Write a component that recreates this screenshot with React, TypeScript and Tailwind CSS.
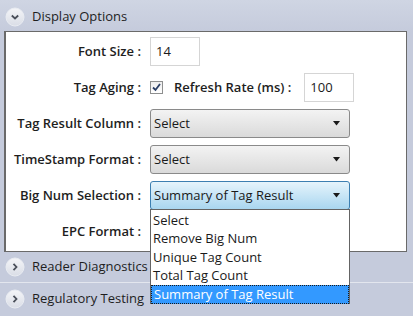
import React from "react";

const font = { fontFamily: '"Open Sans", "Noto Sans", sans-serif' };

function Chevron({ down }: { down?: boolean }) {
  return (
    <svg width="20" height="20" viewBox="0 0 20 20" className="shrink-0">
      <defs>
        <linearGradient id={down ? "cg1" : "cg2"} x1="0" y1="0" x2="0" y2="1">
          <stop offset="0" stopColor="#f4f5f8" />
          <stop offset="1" stopColor="#d9dde6" />
        </linearGradient>
      </defs>
      <circle cx="10" cy="10" r="9" fill={`url(#${down ? "cg1" : "cg2"})`} stroke="#e9ecf2" strokeWidth="1" />
      {down ? (
        <path d="M6.8 8.5 L10 11.5 L13.2 8.5" fill="none" stroke="#4a4f5a" strokeWidth="1.8" />
      ) : (
        <path d="M8.5 6.8 L11.5 10 L8.5 13.2" fill="none" stroke="#4a4f5a" strokeWidth="1.8" />
      )}
    </svg>
  );
}

function Arrow() {
  return (
    <svg width="8" height="5" viewBox="0 0 8 5">
      <path d="M0 0 H7 L3.5 4.5 Z" fill="#1a1a1a" />
    </svg>
  );
}

function SelectBox({ value, active }: { value: string; active?: boolean }) {
  return (
    <div
      className={`w-[200px] h-[29px] rounded-[3px] border flex items-center justify-between pl-[3px] pr-[8px] text-[13px] text-[#1a1a1a] ${
        active
          ? "border-[#3c7fb1] bg-gradient-to-b from-[#e5f4fc] to-[#a9d6ef]"
          : "border-[#8a8a8a] bg-gradient-to-b from-[#f3f3f3] to-[#dadada]"
      }`}
    >
      <span>{value}</span>
      <Arrow />
    </div>
  );
}

function Label({ text }: { text: string }) {
  return <div className="text-right font-semibold text-[13px] text-[#1e1e1e] whitespace-nowrap">{text}</div>;
}

function TextBox({ value }: { value: string }) {
  return (
    <div className="w-[50px] h-[29px] border border-[#d5d5d5] bg-white flex items-center pl-[5px] text-[13px] text-[#1a1a1a]">
      {value}
    </div>
  );
}

const options = ["Select", "Remove Big Num", "Unique Tag Count", "Total Tag Count", "Summary of Tag Result"];

export default function App() {
  return (
    <div style={font} className="w-[413px] h-[316px] bg-[#c5cbdc] flex flex-col overflow-hidden relative">
      {/* Display Options header */}
      <div className="h-[31px] flex items-center gap-[7px] pl-[5px] pt-[2px] bg-gradient-to-b from-[#cfd5e3] to-[#c5cbdc]">
        <Chevron down />
        <span className="text-[13px] text-[#1e1e1e]">Display Options</span>
      </div>

      {/* Panel */}
      <div className="ml-[4px] w-[403px] h-[221px] border border-[#6a6a6a] border-l-2 bg-white pt-[5px] pl-[3px]">
        <div className="grid grid-cols-[132px_auto] gap-x-[9px] gap-y-[7px] items-center">
          <Label text="Font Size :" />
          <TextBox value="14" />

          <Label text="Tag Aging :" />
          <div className="flex items-center h-[29px]">
            <div className="w-[13px] h-[13px] border border-[#8e8f8f] bg-gradient-to-b from-[#eeeeee] to-[#ffffff] flex items-center justify-center">
              <svg width="9" height="9" viewBox="0 0 9 9">
                <path d="M1 4.5 L3.5 7 L8 1" fill="none" stroke="#2a3e66" strokeWidth="1.8" />
              </svg>
            </div>
            <span className="ml-[11px] font-semibold text-[13px] text-[#1e1e1e]">Refresh Rate (ms) :</span>
            <div className="ml-[13px]">
              <TextBox value="100" />
            </div>
          </div>

          <Label text="Tag Result Column :" />
          <SelectBox value="Select" />

          <Label text="TimeStamp Format :" />
          <SelectBox value="Select" />

          <Label text="Big Num Selection :" />
          <SelectBox value="Summary of Tag Result" active />

          <Label text="EPC Format :" />
          <div className="h-[29px]" />
        </div>
      </div>

      {/* Collapsed sections */}
      <div className="h-[31px] flex items-center gap-[7px] pl-[5px] border-b border-[#e3e6ee]">
        <Chevron />
        <span className="text-[13px] text-[#1e1e1e]">Reader Diagnostics</span>
      </div>
      <div className="h-[32px] flex items-center gap-[7px] pl-[5px]">
        <Chevron />
        <span className="text-[13px] text-[#1e1e1e]">Regulatory Testing</span>
      </div>

      {/* Open dropdown list */}
      <div className="absolute left-[150px] top-[209px] w-[200px] h-[95px] border border-[#646464] bg-white flex flex-col pt-[1px]">
        {options.map((o, i) => (
          <div
            key={o}
            className={`h-[18.5px] flex items-center pl-[2px] text-[13px] ${
              i === options.length - 1
                ? "bg-[#3399ff] text-white border border-dotted border-[#1a1a1a]"
                : "text-[#1a1a1a]"
            }`}
          >
            {o}
          </div>
        ))}
      </div>
    </div>
  );
}
